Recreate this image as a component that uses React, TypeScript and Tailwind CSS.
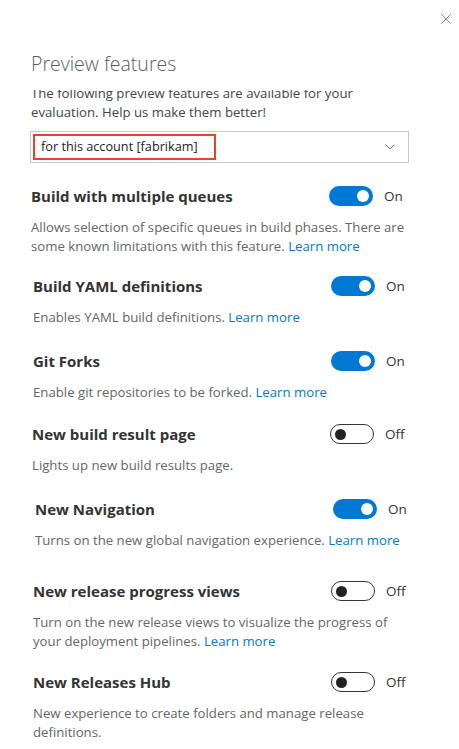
import { ChevronDown, X } from 'lucide-react'

type Feature = {
    title: string
    on: boolean
    desc: string
    link?: boolean
    indent: string
    gap: string
}

const FEATURES: Feature[] = [
    {
        title: 'Build with multiple queues',
        on: true,
        desc: 'Allows selection of specific queues in build phases. There are some known limitations with this feature.',
        link: true,
        indent: 'pl-[31px]',
        gap: 'mt-[23px]',
    },
    { title: 'Build YAML definitions', on: true, desc: 'Enables YAML build definitions.', link: true, indent: 'pl-[33px]', gap: 'mt-[20px]' },
    { title: 'Git Forks', on: true, desc: 'Enable git repositories to be forked.', link: true, indent: 'pl-[33px]', gap: 'mt-[24px]' },
    { title: 'New build result page', on: false, desc: 'Lights up new build results page.', indent: 'pl-[32px]', gap: 'mt-[22px]' },
    { title: 'New Navigation', on: true, desc: 'Turns on the new global navigation experience.', link: true, indent: 'pl-[35px]', gap: 'mt-[24px]' },
    {
        title: 'New release progress views',
        on: false,
        desc: 'Turn on the new release views to visualize the progress of your deployment pipelines.',
        link: true,
        indent: 'pl-[33px]',
        gap: 'mt-[31px]',
    },
    {
        title: 'New Releases Hub',
        on: false,
        desc: 'New experience to create folders and manage release definitions.',
        indent: 'pl-[33px]',
        gap: 'mt-[21px]',
    },
]

function Toggle({ on }: { on: boolean }) {
    return (
        <div className="flex items-center">
            {on ? (
                <div className="w-[44px] h-[20px] rounded-full bg-[#0078d4] flex items-center justify-end pr-[4px]">
                    <div className="w-[12px] h-[12px] rounded-full bg-white" />
                </div>
            ) : (
                <div className="w-[44px] h-[20px] rounded-full border border-[#333] flex items-center pl-[4px]">
                    <div className="w-[11px] h-[11px] rounded-full bg-[#222]" />
                </div>
            )}
            <span className="ml-[11px] text-[13.5px] text-[#333]">{on ? 'On' : 'Off'}</span>
        </div>
    )
}

export default function App() {
    return (
        <div
            className="w-[459px] h-[749px] bg-white overflow-hidden relative"
            style={{ fontFamily: '"Segoe UI", "Open Sans", sans-serif' }}
        >
            <button className="absolute top-[10px] right-[4px] text-[#666]">
                <X size={18} strokeWidth={1} />
            </button>

            <div className="pt-[49px] pl-[31px]">
                <h1 className="text-[19.5px] font-light text-[#5e5e5e] leading-[30px]">Preview features</h1>
            </div>

            {/* Intro, scrolled so the first line is clipped */}
            <div className="mt-[11px] h-[35px] overflow-hidden">
                <p className="-mt-[6px] pl-[31px] w-[400px] text-[13.2px] leading-[19px] text-[#444]">
                    The following preview features are available for your evaluation. Help us make them better!
                </p>
            </div>

            <div className="mt-[6px] ml-[30px] w-[379px] h-[32px] border border-[#c8c8c8] flex items-center pr-[10px]">
                <div className="ml-[2px] w-[183px] h-[26px] border-2 border-[#e8412c] flex items-center pl-[6px] text-[12.7px] text-[#222]">
                    for this account [fabrikam]
                </div>
                <div className="flex-1" />
                <ChevronDown size={16} strokeWidth={1.2} className="text-[#555]" />
            </div>

            {FEATURES.map(f => (
                <div key={f.title} className={`${f.gap} ${f.indent}`}>
                    <div className="flex items-center h-[20px]">
                        <div className="w-[298px] text-[15px] font-bold text-[#333]">{f.title}</div>
                        <Toggle on={f.on} />
                    </div>
                    <p className="mt-[12px] w-[385px] text-[13.2px] leading-[19px] text-[#666]">
                        {f.desc}
                        {f.link && <span className="text-[#0078d4]"> Learn more</span>}
                    </p>
                </div>
            ))}
        </div>
    )
}
